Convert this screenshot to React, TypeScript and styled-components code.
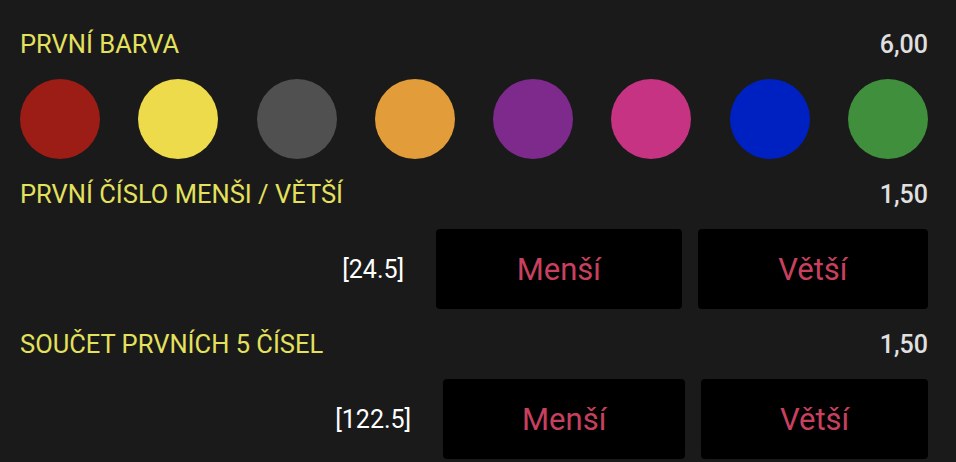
import React from 'react'
import styled, { createGlobalStyle } from 'styled-components'

const GlobalStyle = createGlobalStyle`
    html, body {
        margin: 0;
        padding: 0;
        background: #1a1a1a;
        font-family: Roboto, "Liberation Sans", sans-serif;
    }
`

const colors = ['#9b1d16', '#eedb4b', '#505050', '#e29c39', '#7e2a8c', '#c53382', '#0021c1', '#408f3c']

interface BetRowProps {
    title: string;
    odd: string;
    limit: string;
}

function BetRow({ title, odd, limit }: BetRowProps) {
    return (
        <Section>
            <Header>
                <Title>{title}</Title>
                <Odd>{odd}</Odd>
            </Header>
            <Choices>
                <Limit>[{limit}]</Limit>
                <ChoiceButton type="button">Menší</ChoiceButton>
                <ChoiceButton type="button">Větší</ChoiceButton>
            </Choices>
        </Section>
    )
}

export default function App() {
    return (
        <>
            <GlobalStyle />
            <Page>
                <Section>
                    <Header>
                        <Title>PRVNÍ BARVA</Title>
                        <Odd>6,00</Odd>
                    </Header>
                    <Balls>
                        {colors.map((color, index) => (
                            <Ball key={index} $color={color} />
                        ))}
                    </Balls>
                </Section>
                <BetRow title="PRVNÍ ČÍSLO MENŠI / VĚTŠÍ" odd="1,50" limit="24.5" />
                <BetRow title="SOUČET PRVNÍCH 5 ČÍSEL" odd="1,50" limit="122.5" />
            </Page>
        </>
    )
}

const Page = styled.div`
    display: flex;
    flex-direction: column;
    gap: 20px;
    padding: 29px 28px 0 20px;
`

const Section = styled.section`
    display: flex;
    flex-direction: column;
    gap: 20px;
`

const Header = styled.div`
    display: flex;
    justify-content: space-between;
    align-items: center;
    height: 30px;
`

const Title = styled.h3`
    margin: 0;
    font-size: 25.5px;
    font-weight: 400;
    color: #e4e15d;
`

const Odd = styled.span`
    font-size: 25px;
    font-weight: 500;
    color: #e0e0e0;
`

const Balls = styled.div`
    display: flex;
    justify-content: space-between;
`

const Ball = styled.span<{ $color: string }>`
    width: 80px;
    height: 80px;
    border-radius: 50%;
    background: ${(p) => p.$color};
`

const Choices = styled.div`
    display: flex;
    gap: 16px;
    height: 80px;
`

const Limit = styled.span`
    flex: 2 1 auto;
    display: flex;
    align-items: center;
    justify-content: flex-end;
    padding-right: 16px;
    font-size: 25px;
    color: #ffffff;
`

const ChoiceButton = styled.button`
    flex: 1 1 auto;
    padding: 0;
    border: none;
    border-radius: 4px;
    background: #000;
    font-family: inherit;
    font-size: 31px;
    color: #c9405f;
    cursor: pointer;
`
